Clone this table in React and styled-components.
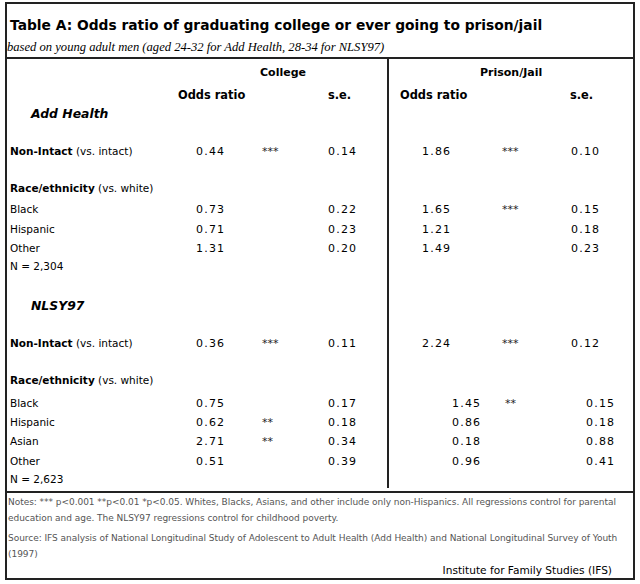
import React from 'react';
import styled, { createGlobalStyle } from 'styled-components';

const Global = createGlobalStyle`
  body {
    margin: 0;
    background: #fff;
    font-family: "DejaVu Sans", Verdana, sans-serif;
    color: #000;
  }
`;

const Frame = styled.div`
  margin: 2px 0 0 5px;
  width: 630px;
  height: 578px;
  box-sizing: border-box;
  border: 2px solid #222;
  display: flex;
  flex-direction: column;
`;

const Header = styled.div`
  height: 54px;
  border-bottom: 2px solid #222;
`;

const Title = styled.h1`
  margin: 11px 0 0 3px;
  font-size: 13.8px;
  line-height: 20px;
  font-weight: bold;
`;

const Subtitle = styled.div`
  margin-top: 4px;
  font-family: "Liberation Serif", Georgia, serif;
  font-style: italic;
  font-size: 12.6px;
  line-height: 16px;
`;

const Body = styled.div`
  display: grid;
  grid-template-columns: 380px 1fr;
  padding-bottom: 3px;
  border-bottom: 2px solid #222;
`;

const Panel = styled.div`
  border-left: ${p => (p.$divided ? '2px solid #222' : 'none')};
`;

const Row = styled.div`
  display: flex;
  align-items: center;
  height: 18px;
  margin-top: ${p => p.$gap}px;
  padding-left: ${p => p.$pad}px;
  white-space: nowrap;
  font-size: 10.5px;
`;

const Cell = styled.div`
  flex: none;
  width: ${p => (p.$w ? `${p.$w}px` : 'auto')};
  font-weight: ${p => (p.$bold ? 'bold' : 'normal')};
  font-size: ${p => p.$size || 10.5}px;
`;

const Num = styled(Cell)`
  font-size: 11px;
  letter-spacing: 1.2px;
`;

const Stars = styled(Cell)`
  font-size: 11px;
  color: #222;
`;

const Section = styled.div`
  padding-left: 21px;
  font-size: 12.4px;
  font-weight: bold;
  font-style: italic;
`;

const Footer = styled.div`
  padding: 1px 2px 0 1px;
  font-size: 9px;
  letter-spacing: -0.04px;
  line-height: 16px;
  color: #555;
`;

const Note = styled.p`
  margin: 0 0 ${p => p.$after || 0}px;
`;

const Credit = styled.div`
  text-align: right;
  padding-right: 19px;
  font-size: 10.6px;
  letter-spacing: 0;
  color: #000;
`;

const rows = [
  { gap: 4, kind: 'group' },
  { gap: 5, kind: 'cols' },
  { gap: 0, kind: 'section', label: 'Add Health' },
  { gap: 20, label: 'Non-Intact', note: '(vs. intact)', c: ['0.44', '***', '0.14'], p: ['1.86', '***', '0.10'] },
  { gap: 19, label: 'Race/ethnicity', note: '(vs. white)' },
  { gap: 3, label: 'Black', c: ['0.73', '', '0.22'], p: ['1.65', '***', '0.15'] },
  { gap: 2, label: 'Hispanic', c: ['0.71', '', '0.23'], p: ['1.21', '', '0.18'] },
  { gap: 1, label: 'Other', c: ['1.31', '', '0.20'], p: ['1.49', '', '0.23'] },
  { gap: 0, label: 'N = 2,304' },
  { gap: 21, kind: 'section', label: 'NLSY97' },
  { gap: 20, label: 'Non-Intact', note: '(vs. intact)', c: ['0.36', '***', '0.11'], p: ['2.24', '***', '0.12'] },
  { gap: 19, label: 'Race/ethnicity', note: '(vs. white)' },
  { gap: 5, label: 'Black', c: ['0.75', '', '0.17'], p: ['1.45', '**', '0.15'], shift: true },
  { gap: 1, label: 'Hispanic', c: ['0.62', '**', '0.18'], p: ['0.86', '', '0.18'], shift: true },
  { gap: 1, label: 'Asian', c: ['2.71', '**', '0.34'], p: ['0.18', '', '0.88'], shift: true },
  { gap: 2, label: 'Other', c: ['0.51', '', '0.39'], p: ['0.96', '', '0.41'], shift: true },
  { gap: 0, label: 'N = 2,623' },
];

function LeftRow({ r }) {
  if (r.kind === 'group')
    return <Row $gap={r.gap} $pad={253}><Cell $bold $size={11}>College</Cell></Row>;
  if (r.kind === 'cols')
    return (
      <Row $gap={r.gap} $pad={171}>
        <Cell $bold $size={11.4} $w={150}>Odds ratio</Cell>
        <Cell $bold $size={11.4}>s.e.</Cell>
      </Row>
    );
  if (r.kind === 'section')
    return <Row $gap={r.gap} $pad={3}><Section>{r.label}</Section></Row>;
  return (
    <Row $gap={r.gap} $pad={3}>
      <Cell $w={186}>
        {r.note ? <><b>{r.label}</b> {r.note}</> : r.label}
      </Cell>
      {r.c && (
        <>
          <Num $w={66}>{r.c[0]}</Num>
          <Stars $w={66}>{r.c[1]}</Stars>
          <Num>{r.c[2]}</Num>
        </>
      )}
    </Row>
  );
}

function RightRow({ r }) {
  if (r.kind === 'group')
    return <Row $gap={r.gap} $pad={91}><Cell $bold $size={11}>Prison/Jail</Cell></Row>;
  if (r.kind === 'cols')
    return (
      <Row $gap={r.gap} $pad={11}>
        <Cell $bold $size={11.4} $w={170}>Odds ratio</Cell>
        <Cell $bold $size={11.4}>s.e.</Cell>
      </Row>
    );
  if (!r.p) return <Row $gap={r.gap} />;
  return (
    <Row $gap={r.gap} $pad={r.shift ? 63 : 33}>
      <Num $w={r.shift ? 53 : 80}>{r.p[0]}</Num>
      <Stars $w={r.shift ? 81 : 69}>{r.p[1]}</Stars>
      <Num>{r.p[2]}</Num>
    </Row>
  );
}

export default function App() {
  return (
    <>
      <Global />
      <Frame>
        <Header>
          <Title>Table A: Odds ratio of graduating college or ever going to prison/jail</Title>
          <Subtitle>based on young adult men (aged 24-32 for Add Health, 28-34 for NLSY97)</Subtitle>
        </Header>
        <Body>
          <Panel>
            {rows.map((r, i) => <LeftRow key={i} r={r} />)}
          </Panel>
          <Panel $divided>
            {rows.map((r, i) => <RightRow key={i} r={r} />)}
          </Panel>
        </Body>
        <Footer>
          <Note $after={4}>
            Notes: *** p&lt;0.001 **p&lt;0.01 *p&lt;0.05. Whites, Blacks, Asians, and other include only non-Hispanics. All regressions control for parental education and age. The NLSY97 regressions control for childhood poverty.
          </Note>
          <Note>
            Source: IFS analysis of National Longitudinal Study of Adolescent to Adult Health (Add Health) and National Longitudinal Survey of Youth (1997)
          </Note>
          <Credit>Institute for Family Studies (IFS)</Credit>
        </Footer>
      </Frame>
    </>
  );
}
